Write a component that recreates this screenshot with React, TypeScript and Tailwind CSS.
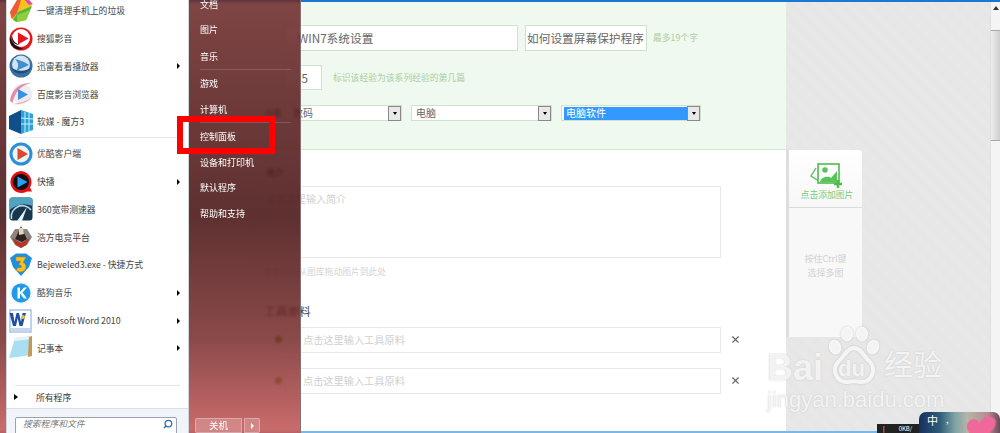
import { Search, X } from "lucide-react";

const font = "font-['Noto_Sans_CJK_SC','Liberation_Sans',sans-serif]";

// start menu left column, in screen order
const topApps = [
  { name: "一键清理手机上的垃圾", icon: "clean" },
  { name: "搜狐影音", icon: "sohu" },
  { name: "迅雷看看播放器", icon: "xunlei", more: true },
  { name: "百度影音浏览器", icon: "baidu" },
  { name: "软媒 - 魔方3", icon: "cube" },
];

const bottomApps = [
  { name: "优酷客户端", icon: "youku" },
  { name: "快播", icon: "qvod", more: true },
  { name: "360宽带测速器", icon: "speed" },
  { name: "浩方电竞平台", icon: "haofang" },
  { name: "Bejeweled3.exe - 快捷方式", icon: "bej" },
  { name: "酷狗音乐", icon: "kugou", more: true },
  { name: "Microsoft Word 2010", icon: "word", more: true },
  { name: "记事本", icon: "note", more: true },
];

const AppIcon = ({ type }: { type: string }) => {
  return (
    <svg viewBox="0 0 24 24" className="w-[24px] h-[24px] shrink-0">
      {type === "clean" && (
        <g>
          <path d="M1 13 L8 1 L18 0 L23 6 L16 21 L7 23 L2 19Z" fill="#f6c21c" />
          <path d="M1 13 L8 1 L12 1 L8 14 L3 20Z" fill="#ef5a3c" />
          <path d="M9 13 L23 7 L17 21 L8 23 L4 21Z" fill="#4db848" />
          <path d="M8 16 L21 11 L17 21 L8 23Z" fill="#8fce3a" />
          <path d="M15 0 L19 0 L24 5 L20 6Z" fill="#d84fa8" />
        </g>
      )}
      {type === "sohu" && (
        <g>
          <circle cx="12" cy="12" r="11.5" fill="#e8141c" />
          <circle cx="12" cy="11" r="9" fill="#fff" />
          <path d="M1.5 10 C3 19 9 19 14 22 C6 24 -1 18 1.5 10Z" fill="#111" />
          <path d="M3 9 C4 15 8 17 11 18 C6 18 2 15 3 9Z" fill="#111" />
          <polygon points="9,5.5 19.5,11.5 9,17.5" fill="#e8141c" />
        </g>
      )}
      {type === "xunlei" && (
        <g>
          <circle cx="12" cy="12" r="11.5" fill="#3a6f9f" />
          <circle cx="12" cy="10.5" r="9" fill="#d3e4f0" />
          <path d="M2 13 C5 22 19 22 22 13 C18 18 7 18 2 13Z" fill="#1f4e7c" />
          <path d="M6 5 C11 6 16 8 20 11 C16 13 11 15 7 17 C10 13 10 9 6 5Z" fill="#3f8fd0" />
        </g>
      )}
      {type === "baidu" && (
        <g>
          <ellipse cx="13" cy="12" rx="10.5" ry="10" fill="#eceef4" />
          <path d="M1 19 C2 9 10 0 22 1 C13 3 6 9 3.5 21Z" fill="#e88aa0" />
          <path d="M4 22 C10 23 18 21 23 15 C18 19 11 21 4 22Z" fill="#e9a6b4" />
          <polygon points="9,7 19,12.5 9,18" fill="#3d8fe0" />
        </g>
      )}
      {type === "cube" && (
        <g>
          <polygon points="0,6 12,0 12,24 0,19" fill="#0f4f8c" />
          <polygon points="12,0 24,4 24,20 12,24" fill="#2aa3d8" />
          <path d="M16 2 V23 M20 3 V21 M12 8 L24 9 M12 14 L24 14" stroke="#cfeefa" strokeWidth="1" />
        </g>
      )}
      {type === "youku" && (
        <g>
          <circle cx="12" cy="12" r="11.5" fill="#2a8fd6" />
          <circle cx="12" cy="12" r="8.5" fill="#eef3f6" />
          <polygon points="8.5,6 19,12 8.5,18" fill="#d9492f" />
        </g>
      )}
      {type === "qvod" && (
        <g>
          <path d="M12 1 A11 11 0 1 0 18 21.5 H23 L21 17.5 A11 11 0 0 0 12 1Z" fill="#e30f17" />
          <circle cx="12" cy="12" r="8" fill="#111" />
          <polygon points="8.5,6.5 18.5,12 8.5,17.5" fill="#2a9ff0" />
        </g>
      )}
      {type === "speed" && (
        <g>
          <rect x="0.5" y="0.5" width="23" height="23" rx="3" fill="#17364c" />
          <path d="M0.5 3 Q0.5 0.5 3 0.5 H21 Q23.5 0.5 23.5 3 V9 Q12 4 0.5 13Z" fill="#4fa3bf" />
          <path d="M2.5 22 A11 11 0 0 1 22 13" fill="none" stroke="#b7dcea" strokeWidth="1.6" />
          <path d="M8 24 L18 10 L13 24Z" fill="#e8f4fa" />
        </g>
      )}
      {type === "haofang" && (
        <g>
          <path d="M1 12 L6 4 L18 4 L23 12 L18 20 L12 23 L6 20Z" fill="#8b8582" />
          <path d="M3 13 L12 18 L21 13 L17 20 L12 23 L7 20Z" fill="#b5352a" />
          <path d="M12 1 L15 8 L18 14 L13 17 L6 14 L9 8Z" fill="#2c2320" />
          <path d="M10 3 L14 3 L15 9 L10 10Z" fill="#e4d4bc" />
        </g>
      )}
      {type === "bej" && (
        <g>
          <path d="M1 5 L7 0.5 H17 L23 5 L20 14 L12 23 L4 14Z" fill="#1d8fe0" />
          <path d="M7 4 H17 L14 9.5 Q18 11 16.5 16 Q13.5 21 7 17.5 L9 14.5 Q12.5 16 12.5 13.5 Q12.5 11.5 10 12 L11.5 8 H7Z" fill="#f8c21a" stroke="#d97a12" strokeWidth="0.5" />
        </g>
      )}
      {type === "kugou" && (
        <g>
          <circle cx="12" cy="12" r="11.5" fill="#f3f6f9" />
          <circle cx="12" cy="12" r="9.5" fill="#1f9ae8" />
          <path d="M8.5 6.5 H11 V11 L15 6.5 H18 L13.5 11.5 L18 17.5 H15 L11 12.5 V17.5 H8.5Z" fill="#fff" />
        </g>
      )}
      {type === "word" && (
        <g>
          <rect x="1" y="1" width="21" height="22" fill="#fff" stroke="#7ea6d6" />
          <path d="M0.5 4 H4 L5.5 13 L7.5 4 H10 L12 13 L13.5 4 H17 L13.5 17 H10.5 L8.7 9 L7 17 H4Z" fill="#1d4fa6" />
          <path d="M14 10 A2 2 0 1 1 14.01 10Z" fill="#e9c23a" />
          <path d="M2 19 H21 V22 H2Z" fill="#c5d8ef" />
        </g>
      )}
      {type === "note" && (
        <g>
          <path d="M6 2 L23 0 L23 19 L0 22Z" fill="#a9dff0" />
          <path d="M6 2 L23 0 L23 3 L5.5 5Z" fill="#e6f4fa" />
          <path d="M20 1 L23 0 L23 20 L19 21Z" fill="#c9974e" />
        </g>
      )}
    </svg>
  );
};

const AppRow = ({ name, icon, more }: { name: string; icon: string; more?: boolean }) => (
  <div className="flex items-center h-[27.8px] pl-[2px] pr-[8px]">
    <AppIcon type={icon} />
    <span className="ml-[4px] flex-1 text-[8.8px] text-[#444] whitespace-nowrap">{name}</span>
    {more && <span className="w-0 h-0 border-y-[3px] border-y-transparent border-l-[3.5px] border-l-black" />}
  </div>
);

const links = [
  { label: "文档", h: 25.5 },
  { label: "图片", h: 25.5 },
  { label: "音乐", h: 28 },
  { label: "游戏", h: 25.5 },
  { label: "计算机", h: 28 },
  { label: "控制面板", h: 25.5 },
  { label: "设备和打印机", h: 25.5 },
  { label: "默认程序", h: 25.5 },
  { label: "帮助和支持", h: 25.5 },
];

const ToolInput = () => (
  <div className="flex items-center">
    <div className="w-[436px] h-[26px] flex items-center pl-[17px] bg-white border border-[#e8e8e8] text-[10.2px] text-[#d0d0d0]">
      点击这里输入工具原料
    </div>
    <X className="ml-[9px] w-[11px] h-[11px] text-[#666]" strokeWidth={2.5} />
  </div>
);

const SelectArrow = () => (
  <span className="w-[13px] h-[15px] flex items-center justify-center bg-[#e8e8e8] border border-[#8a8a8a]">
    <span className="w-0 h-0 border-x-[2.5px] border-x-transparent border-t-[3px] border-t-black" />
  </span>
);

const SelectBox = ({ text, w, active }: { text: string; w: string; active?: boolean }) => (
  <div className={`${w} h-[16px] flex items-center bg-white border border-[#cfe3cc] text-[10px] text-[#666]`}>
    <span className={`flex-1 h-[13px] ml-[2px] flex items-center leading-none pl-[2px] ${active ? "bg-[#3399ff] text-white" : ""}`}>
      {text}
    </span>
    <SelectArrow />
  </div>
);

export default function App() {
  return (
    <div className={`relative w-[1000px] h-[433px] overflow-hidden ${font} bg-[#e6e6e6]`}>
      {/* page behind the menu */}
      <main className="w-full h-full flex flex-col">
        <div className="h-[2px] bg-[#1a78d0]" />
        <div className="flex-1 flex min-h-0">
          <div className="w-[786px] h-full flex flex-col bg-white">
            <div className="h-[148px] bg-[#f0f9ef] border-b border-b-[#d3e8d0] pl-[264px]">
              <div className="flex items-center mt-[23px] h-[26px]">
                <span className="w-[20px]" />
                <div className="w-[234px] h-[26px] flex items-center pl-[13px] bg-white border border-[#cfe3cc] text-[11.7px] text-[#666]">
                  WIN7系统设置
                </div>
                <div className="ml-[7px] w-[122px] h-[26px] flex items-center pl-[1px] bg-white border border-[#cfe3cc] text-[11.7px] text-[#666] whitespace-nowrap">
                  如何设置屏幕保护程序
                </div>
                <span className="ml-[6px] text-[8.8px] text-[#a8cfa4] whitespace-nowrap">最多19个字</span>
              </div>
              <div className="flex items-center mt-[14px] h-[25px]">
                <div className="ml-[20px] w-[38px] h-[25px] flex items-center justify-end pr-[13px] bg-white border border-[#cfe3cc] text-[11.7px] text-[#666]">
                  5
                </div>
                <span className="ml-[11px] text-[8.8px] text-[#a8cfa4] whitespace-nowrap">标识该经验为该系列经验的第几篇</span>
              </div>
              <div className="flex items-center mt-[15px] gap-[9px] h-[16px]">
                <span className="w-[20px] mr-[-9px] text-[9px] text-[#555]">分类</span>
                <div className="w-[118px] h-[16px] flex items-center bg-white border border-[#cfe3cc] text-[10px] text-[#666]">
                  <span className="flex-1 pl-[8px] leading-none">数码</span>
                  <SelectArrow />
                </div>
                <SelectBox text="电脑" w="w-[141px]" />
                <SelectBox text="电脑软件" w="w-[140px]" active />
              </div>
            </div>

            <div className="flex-1 flex flex-col pl-[264px]">
              <span className="mt-[17px] ml-[2px] text-[9px] leading-[12px] text-[#555]">简介</span>
              <div className="ml-[-14px] mt-[7px] w-[471px] h-[72px] pl-[15px] pt-[4px] bg-white border border-[#e8e8e8] text-[10px] text-[#d0d0d0] shrink-0">
                点击这里输入简介
              </div>
              <p className="mt-[7px] ml-[-1px] text-[8.8px] text-[#d4d4d4] whitespace-nowrap">您也可以从图库拖动图片到此处</p>
              <p className="mt-[24px] text-[11.7px] text-[#444]">工具原料</p>
              <div className="mt-[7px] flex items-center">
                <span className="ml-[11px] w-[7px] h-[7px] rounded-full bg-[#3f8a00]" />
                <span className="w-[3px]" />
                <ToolInput />
              </div>
              <div className="mt-[15px] flex items-center">
                <span className="ml-[11px] w-[7px] h-[7px] rounded-full bg-[#3f8a00]" />
                <span className="w-[3px]" />
                <ToolInput />
              </div>
            </div>
          </div>

          {/* textured strip with the image tool */}
          <div className="flex-1 h-full bg-[repeating-linear-gradient(45deg,#e5e5e5_0,#e5e5e5_1px,#e9e9e9_1px,#e9e9e9_2px)]">
            <div className="mt-[148px] w-[76px] flex flex-col border-l-[3px] border-l-[#dedede]">
              <div className="h-[58px] flex flex-col items-center bg-gradient-to-b from-white to-[#f7f7f7] rounded-tr-[4px] border-b border-b-[#dcdcdc]">
                <svg viewBox="0 0 32 28" className="w-[32px] h-[28px] mt-[12px]">
                  <path d="M6 6 L1 14 L9 19" fill="none" stroke="#5cc35a" strokeWidth="1.4" />
                  <rect x="8" y="2" width="21" height="19" fill="#fff" stroke="#4fbb4d" strokeWidth="1.6" />
                  <circle cx="15" cy="8" r="2.8" fill="#5cc35a" />
                  <path d="M10 20 C11 14 20 14 21 16 C23 14 25 11 27 9 V20Z" fill="#5cc35a" />
                  <path d="M24 22 H32 M28 18 V26" stroke="#4fbb4d" strokeWidth="2.4" />
                </svg>
                <span className="mt-[-2px] ml-[3px] text-[8.8px] text-[#7ccd7a] whitespace-nowrap">点击添加图片</span>
              </div>
              <div className="h-[129px] flex flex-col items-center pt-[44px] bg-[#f8f8f8] text-[9px] leading-[14px] text-[#d2d2d2]">
                <span>按住Ctrl键</span>
                <span>选择多图</span>
              </div>
            </div>
          </div>

          {/* scrollbar */}
          <div className="w-[10px] h-full flex flex-col items-center bg-[#f4f4f4] border-l border-l-[#e0e0e0]">
            <span className="mt-[4px] w-0 h-0 border-x-[3px] border-x-transparent border-b-[4px] border-b-[#333]" />
            <div className="mt-[20px] w-full h-[111px] bg-gradient-to-r from-[#ececec] to-[#cfcfcf] border-y border-[#a8a8a8]" />
          </div>
        </div>
        <div className="h-[2px] bg-[#7ab8e8]" />
      </main>

      {/* start menu, sits over the page */}
      <aside className="absolute left-0 top-0 h-full w-[301px] flex bg-[linear-gradient(180deg,#6a2626d9_0%,#420c0cd9_50%,#762a2ad9_78%,#c35252d9_100%)] backdrop-blur-[1.5px] border-r border-r-[#8a7070]">
        <div className="w-[6px]" />
        <div className="w-[183px] h-full flex flex-col bg-white border-x border-x-[#cfd6de]">
          <div className="mt-[-3px] shrink-0">
            {topApps.map((a) => (
              <AppRow key={a.name} {...a} />
            ))}
          </div>
          <div className="mx-[8px] my-[1.5px] h-px shrink-0 bg-[#e3ebf5]" />
          <div className="shrink-0">
            {bottomApps.map((a) => (
              <AppRow key={a.name} {...a} />
            ))}
          </div>
          <div className="mx-[8px] mt-[23px] h-px shrink-0 bg-[#dfe5ec]" />
          <div className="flex items-center h-[22px] shrink-0 pl-[7px] text-[8.8px] text-[#333]">
            <span className="w-0 h-0 border-y-[3.5px] border-y-transparent border-l-[4px] border-l-black" />
            <span className="ml-[18px]">所有程序</span>
          </div>
          <div className="flex-1 min-h-0 overflow-hidden bg-[#f1f5fa] border-t border-t-[#d5e0ec] pl-[8px] pt-[8px]">
            <div className="w-[162px] h-[20px] flex items-start bg-white border border-[#9aa3ad] rounded-[2px] pl-[7px] pr-[3px] text-[8.8px] leading-[12px] italic text-[#777]">
              <span className="flex-1">搜索程序和文件</span>
              <Search className="-scale-x-100 w-[10px] h-[10px] mt-[1px] text-[#2a6fb5]" strokeWidth={3} />
            </div>
          </div>
        </div>
        <div className="flex-1 flex flex-col pl-[11px] text-[9px] text-white">
          <div className="mt-[-8.5px]">
            {links.map((l, i) => (
              <div key={l.label} style={{ height: l.h }} className="flex items-center relative">
                {l.label}
                {(i === 2 || i === 4) && <span className="absolute left-0 bottom-[1px] w-[91px] h-px bg-white/15" />}
              </div>
            ))}
          </div>
          <div className="mt-auto ml-[-5px] flex items-center h-[15px] text-[9.5px]">
            <div className="w-[47px] h-full flex items-center justify-center bg-white/20 border border-white/30 rounded-l-[2px]">关机</div>
            <div className="ml-[2px] w-[16px] h-full flex items-center justify-center bg-white/20 border border-white/30 rounded-r-[2px]">
              <span className="w-0 h-0 border-y-[3px] border-y-transparent border-l-[3.5px] border-l-white" />
            </div>
          </div>
        </div>
      </aside>

      {/* red highlight drawn on the screenshot */}
      <div className="absolute left-[177px] top-[116px] w-[98px] h-[38px] border-[6px] border-[#ff0000]" />

      {/* baidu watermark */}
      <div className="absolute left-[767px] top-[327px] w-[180px] h-[84px] text-white/80 font-['Liberation_Sans',sans-serif] [text-shadow:0_0_1.5px_#bdbdbd] pointer-events-none">
        <svg viewBox="0 0 52 58" className="absolute left-[61px] top-0 w-[52px] h-[58px] drop-shadow-[0_0_1px_#bdbdbd]" fill="none" stroke="currentColor">
          <ellipse cx="7" cy="20" rx="5.5" ry="7" fill="currentColor" transform="rotate(-20 7 20)" />
          <ellipse cx="19" cy="7" rx="5.5" ry="7" fill="currentColor" />
          <ellipse cx="34" cy="7" rx="5.5" ry="7" fill="currentColor" />
          <ellipse cx="45" cy="20" rx="5.5" ry="7" fill="currentColor" transform="rotate(20 45 20)" />
          <path d="M26 21 C19 21 17 29 10 35 C3 43 9 56 20 55 C24 54 28 54 32 55 C43 56 49 43 42 35 C35 29 33 21 26 21Z" strokeWidth="4" />
        </svg>
        <span className="absolute left-0 top-[23px] text-[36px] leading-none font-bold">Bai</span>
        <span className="absolute left-[71px] top-[31px] text-[22px] leading-none font-bold">du</span>
        <span className="absolute left-[117px] top-[22px] text-[29px] leading-none font-['Noto_Sans_CJK_SC',sans-serif]">经验</span>
        <span className="absolute left-0 top-[62px] text-[22px] leading-none whitespace-nowrap">jingyan.baidu.com</span>
      </div>

      {/* taskbar speed meter and IME bar */}
      <div className="absolute left-[877px] top-[424px] w-[44px] h-[9px] bg-[#222] text-white text-[6px] leading-[9px] pl-[6px]">
        |<span className="ml-[14px]">0KB/</span>
      </div>
      <div className="absolute left-[919px] top-[412px] w-[81px] h-[21px] rounded-t-[7px] bg-[linear-gradient(90deg,#16305e_0%,#2f5a78_25%,#7fa5a5_45%,#b8b4a8_60%,#b98a90_85%,#6b4a5a_100%)] text-white text-[11px] pl-[8px] leading-[17px]">
        中
        <span className="absolute left-[27px] top-[2px] text-[9px] leading-[12px]">,</span>
        <svg viewBox="0 0 24 20" className="absolute right-[3px] top-[3px] w-[32px] h-[27px]">
          <path d="M10 20 C3 14 0 10 2 6 C4 2 9 2 11 6 C14 0 21 0 23 4 C24 10 17 15 10 20Z" fill="#f0689a" />
        </svg>
      </div>
    </div>
  );
}
